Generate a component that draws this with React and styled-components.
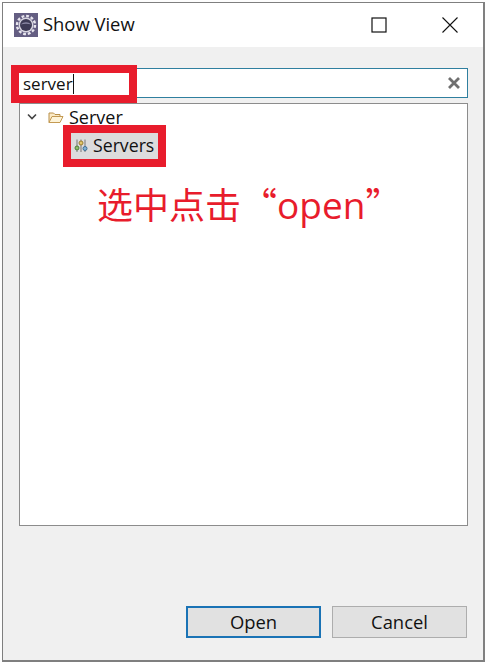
import React from "react";
import styled, { createGlobalStyle } from "styled-components";

const GlobalStyle = createGlobalStyle`
    html, body {
        margin: 0;
        padding: 0;
        background: #fdfdfd;
    }
    body {
        font-family: "Open Sans", "Noto Sans", "Noto Sans CJK SC", sans-serif;
        color: #111;
    }
`;

const Window = styled.div`
    box-sizing: border-box;
    width: 483px;
    height: 660px;
    margin: 2px 0 0 2px;
    border: 1px solid #7f7f7f;
    border-right-width: 2px;
    border-bottom-width: 2px;
    background: #f0f0f0;
    display: flex;
    flex-direction: column;
    position: relative;
`;

const TitleBar = styled.div`
    height: 44px;
    flex: none;
    background: #fff;
    display: flex;
    align-items: center;
    padding-left: 11px;
`;

const TitleText = styled.span`
    font-size: 18.4px;
    margin-left: 5px;
    flex: 1;
    padding-bottom: 4px;
`;

const WindowButton = styled.div`
    width: 46px;
    height: 32px;
    display: flex;
    align-items: center;
    justify-content: center;
    margin-right: ${(p) => p.$gap}px;
`;

const Body = styled.div`
    flex: 1;
    display: flex;
    flex-direction: column;
    padding: 21px 15px 22px 16px;
    min-height: 0;
`;

const SearchBox = styled.div`
    box-sizing: border-box;
    height: 30px;
    flex: none;
    margin-left: 2px;
    border: 1px solid #2f7f9f;
    background: #fff;
    display: flex;
    align-items: center;
    justify-content: flex-end;
    padding-right: 6px;
`;

const SearchHighlight = styled.div`
    position: absolute;
    left: 8px;
    top: 62px;
    width: 110px;
    height: 22px;
    border: 8px solid #e81c2c;
    background: #fff;
    font-size: 17px;
    line-height: 22px;
    text-indent: 4px;
    display: flex;
    align-items: center;
`;

const Caret = styled.span`
    width: 1px;
    height: 20px;
    background: #111;
`;

const Tree = styled.div`
    box-sizing: border-box;
    flex: 1;
    margin-top: 5px;
    border: 1px solid #8c8c8c;
    background: #fff;
    padding-top: 2px;
    min-height: 0;
`;

const FolderRow = styled.div`
    height: 22px;
    display: flex;
    align-items: center;
    padding-left: 7px;
    font-size: 18px;
`;

const FolderIconWrap = styled.span`
    display: flex;
    margin-left: 11px;
`;

const FolderLabel = styled.span`
    margin-left: 5px;
`;

const ViewRow = styled.div`
    width: 87px;
    height: 26px;
    margin: -3px 0 0 43px;
    border: 8px solid #e81c2c;
    background: #dcdcdc;
    display: flex;
    align-items: center;
    font-size: 17.7px;
    gap: 5px;
    position: relative;
`;

const ViewIconWrap = styled.span`
    display: flex;
    margin-left: 3px;
`;

const ViewLabel = styled.span`
    padding-bottom: 2px;
`;

const Note = styled.div`
    position: absolute;
    left: 94px;
    top: 176px;
    font-family: "Noto Sans CJK SC", sans-serif;
    font-size: 36px;
    line-height: 48px;
    color: #e81c2c;
    white-space: nowrap;
`;

const NoteLatin = styled.span`
    font-family: "Open Sans", sans-serif;
    font-size: 37px;
`;

const Footer = styled.div`
    display: flex;
    justify-content: flex-end;
    gap: 11px;
    margin: 80px 1px 0 0;
    flex: none;
`;

const Button = styled.div`
    box-sizing: border-box;
    width: 135px;
    height: 32px;
    background: #e1e1e1;
    border: ${(p) => (p.$primary ? "2px solid #1a73b5" : "1px solid #adadad")};
    display: flex;
    align-items: center;
    justify-content: center;
    font-size: 18.4px;
    padding-bottom: 2px;
`;

const GearIcon = () => (
    <svg width="24" height="24" viewBox="0 0 24 24">
        <rect width="24" height="24" fill="#645e82" />
        <circle cx="12" cy="12" r="9" fill="none" stroke="#e8e6ee" strokeWidth="2.4" strokeDasharray="2.8 1.9" />
        <circle cx="12" cy="12" r="7.4" fill="#d9d7e2" />
        <circle cx="12" cy="12" r="6" fill="#3d3a55" />
        <path d="M6.5 11.5 Q12 7 17.5 11.5 Q12 9.8 6.5 11.5z" fill="#8b88a5" />
    </svg>
);

const MaximizeIcon = () => (
    <svg width="16" height="16" viewBox="0 0 16 16">
        <rect x="1" y="1" width="14" height="14" fill="none" stroke="#111" strokeWidth="1.2" />
    </svg>
);

const CloseIcon = () => (
    <svg width="16" height="16" viewBox="0 0 16 16">
        <path d="M0.5 0.5 L15.5 15.5 M15.5 0.5 L0.5 15.5" stroke="#111" strokeWidth="1.1" fill="none" />
    </svg>
);

const ClearIcon = () => (
    <svg width="14" height="14" viewBox="0 0 14 14">
        <path d="M2 2 L12 12 M12 2 L2 12" stroke="#707070" strokeWidth="2.8" fill="none" />
    </svg>
);

const Chevron = () => (
    <svg width="10" height="8" viewBox="0 0 10 8">
        <path d="M1 1.5 L5 5.5 L9 1.5" stroke="#444" strokeWidth="1.6" fill="none" />
    </svg>
);

const FolderIcon = () => (
    <svg width="16" height="13" viewBox="0 0 16 13">
        <path d="M1 11.5 V2 H5.5 L7 3.5 H12 V5.5" fill="#fbe9c4" stroke="#b8904a" />
        <path d="M1 11.5 L4 5.5 H15 L12 11.5 Z" fill="#fdf3d8" stroke="#c49a52" />
    </svg>
);

const ServersIcon = () => (
    <svg width="14" height="14" viewBox="0 0 14 14">
        <path d="M3 0.5 V13 M7 0.5 V13 M11 0.5 V13" stroke="#777" strokeWidth="1" />
        <circle cx="3" cy="9" r="2" fill="#8fbf6a" stroke="#4f7d3a" />
        <circle cx="7" cy="4" r="2" fill="#e3c66a" stroke="#9a7f2e" />
        <circle cx="11" cy="9.5" r="2" fill="#7fb2d8" stroke="#3d6f96" />
    </svg>
);

const App = () => (
    <>
        <GlobalStyle />
        <Window>
            <TitleBar>
                <GearIcon />
                <TitleText>Show View</TitleText>
                <WindowButton $gap={25}>
                    <MaximizeIcon />
                </WindowButton>
                <WindowButton $gap={10}>
                    <CloseIcon />
                </WindowButton>
            </TitleBar>
            <Body>
                <SearchBox>
                    <ClearIcon />
                </SearchBox>
                <Tree>
                    <FolderRow>
                        <Chevron />
                        <FolderIconWrap>
                            <FolderIcon />
                        </FolderIconWrap>
                        <FolderLabel>Server</FolderLabel>
                    </FolderRow>
                    <ViewRow>
                        <ViewIconWrap>
                            <ServersIcon />
                        </ViewIconWrap>
                        <ViewLabel>Servers</ViewLabel>
                    </ViewRow>
                </Tree>
                <Footer>
                    <Button $primary>Open</Button>
                    <Button>Cancel</Button>
                </Footer>
            </Body>
            <SearchHighlight>
                server
                <Caret />
            </SearchHighlight>
            <Note>
                选中点击“<NoteLatin>open</NoteLatin>”
            </Note>
        </Window>
    </>
);

export default App;
